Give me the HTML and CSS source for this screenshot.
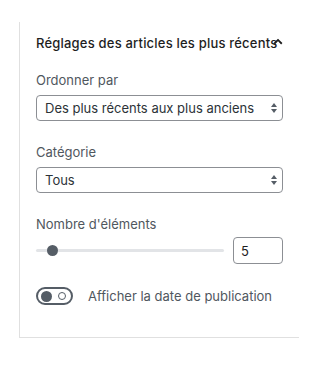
FILE: index.html
```html
<!DOCTYPE html>
<html lang="fr">
<head>
  <meta charset="UTF-8" />
  <title>Réglages des articles les plus récents</title>
  <meta name="viewport" content="width=device-width, initial-scale=1.0">
  <link rel="stylesheet" href="styles.css">
</head>
<body>

<div class="panel">
  <button class="panel-title">
    <span>Réglages des articles les plus récents</span>
    <svg class="chevron" width="14" height="14" viewBox="0 0 24 24"><path d="M5.5 15 12 8.5l6.5 6.5" fill="none" stroke="#1e1e1e" stroke-width="3.2"/></svg>
  </button>

  <div class="field">
    <label class="label">Ordonner par</label>
    <div class="select">
      <span>Des plus récents aux plus anciens</span>
      <svg class="arrows" width="8" height="12" viewBox="0 0 8 12"><path d="M4 1 7 5H1z M4 11 1 7h6z" fill="#555d66"/></svg>
    </div>
  </div>

  <div class="field">
    <label class="label">Catégorie</label>
    <div class="select">
      <span>Tous</span>
      <svg class="arrows" width="8" height="12" viewBox="0 0 8 12"><path d="M4 1 7 5H1z M4 11 1 7h6z" fill="#555d66"/></svg>
    </div>
  </div>

  <div class="field">
    <label class="label">Nombre d'éléments</label>
    <div class="range-row">
      <div class="track"><div class="thumb" style="left: 16px"></div></div>
      <input class="number" type="text" value="5">
    </div>
  </div>

  <div class="toggle-row">
    <span class="toggle"><span class="knob"></span><span class="ring"></span></span>
    <span class="toggle-label">Afficher la date de publication</span>
  </div>
</div>

</body>
</html>
```

FILE: styles.css
```css
* {
  box-sizing: border-box;
}

body {
  margin: 0;
  background: #fff;
  font-family: Inter, "Noto Sans", sans-serif;
  font-size: 13px;
  color: #1e1e1e;
}

.panel {
  margin: 22px 0 0 19px;
  width: 280px;
  padding: 11px 16px 32px 16px;
  border-left: 1px solid #e0e0e0;
  border-bottom: 1px solid #e0e0e0;
}

.panel-title {
  position: relative;
  display: block;
  width: 100%;
  padding: 0;
  margin: 0 0 19px;
  border: none;
  background: none;
  font: inherit;
  font-weight: 500;
  letter-spacing: 0.2px;
  line-height: 20px;
  color: #1e1e1e;
  text-align: left;
  white-space: nowrap;
}

.chevron {
  position: absolute;
  right: -2px;
  top: 2px;
}

.field {
  margin-bottom: 23px;
}

.label {
  display: block;
  line-height: 16px;
  margin-bottom: 7px;
  color: #50575e;
}

.select {
  position: relative;
  height: 26px;
  border: 1px solid #8c8f94;
  border-radius: 4px;
  padding: 0 8px;
  line-height: 24px;
  color: #2c3338;
}

.arrows {
  position: absolute;
  right: 4px;
  top: 6px;
}

.range-row {
  display: flex;
  align-items: center;
  gap: 9px;
  margin-top: -2px;
}

.track {
  position: relative;
  flex: 1;
  height: 3px;
  background: #e2e4e7;
  border-radius: 2px;
}

.thumb {
  position: absolute;
  top: -4px;
  width: 11px;
  height: 11px;
  margin-left: -5px;
  border-radius: 50%;
  background: #555d66;
}

.number {
  width: 50px;
  height: 27px;
  padding: 0 7px;
  border: 1px solid #8c8f94;
  border-radius: 4px;
  font: inherit;
  color: #1e1e1e;
}

.toggle-row {
  display: flex;
  align-items: center;
  gap: 15px;
}

.toggle {
  display: flex;
  align-items: center;
  justify-content: space-between;
  width: 37px;
  height: 18px;
  padding: 0 5px 0 3px;
  border: 2px solid #555d66;
  border-radius: 9px;
}

.knob {
  width: 11px;
  height: 11px;
  border-radius: 50%;
  background: #555d66;
}

.ring {
  width: 8px;
  height: 8px;
  border-radius: 50%;
  border: 1.5px solid #555d66;
}

.toggle-label {
  color: #50575e;
}
```
